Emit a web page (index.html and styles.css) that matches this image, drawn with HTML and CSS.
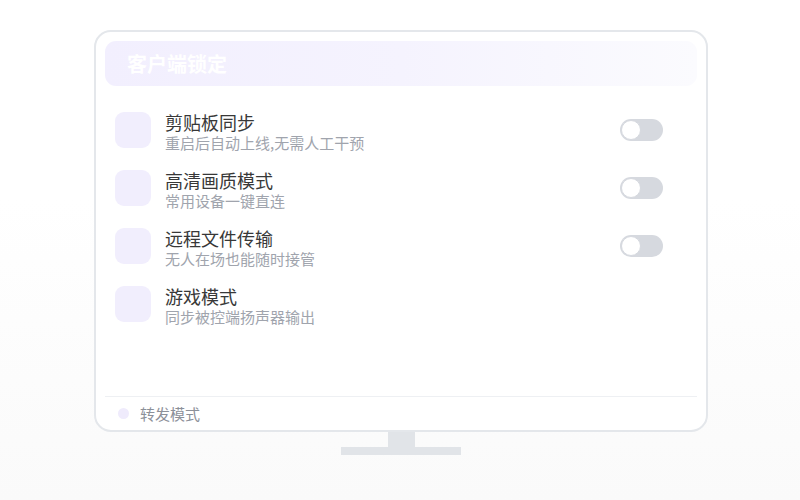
FILE: index.html
```html
<!DOCTYPE html>
<html lang="zh">
<head>
<meta charset="utf-8">
<link rel="stylesheet" href="styles.css">
</head>
<body>
<div class="stage">
  <div class="monitor">
    <div class="header">客户端锁定</div>
    <div class="list">
      <div class="row">
        <div class="icon"></div>
        <div class="text"><div class="title">剪贴板同步</div><div class="sub">重启后自动上线,无需人工干预</div></div>
        <div class="toggle"><span class="knob"></span></div>
      </div>
      <div class="row">
        <div class="icon"></div>
        <div class="text"><div class="title">高清画质模式</div><div class="sub">常用设备一键直连</div></div>
        <div class="toggle"><span class="knob"></span></div>
      </div>
      <div class="row">
        <div class="icon"></div>
        <div class="text"><div class="title">远程文件传输</div><div class="sub">无人在场也能随时接管</div></div>
        <div class="toggle"><span class="knob"></span></div>
      </div>
      <div class="row">
        <div class="icon"></div>
        <div class="text"><div class="title">游戏模式</div><div class="sub">同步被控端扬声器输出</div></div>
      </div>
    </div>
    <div class="footer"><span class="dot"></span><span class="ftext">转发模式</span></div>
  </div>
  <div class="neck"></div>
  <div class="base"></div>
</div>
</body>
</html>
```
FILE: styles.css
```css
html, body {
  margin: 0;
  padding: 0;
}
body {
  width: 800px;
  height: 500px;
  background: linear-gradient(to bottom, #ffffff 0%, #ffffff 40%, #fafafa 100%);
  font-family: "Noto Sans CJK SC", "Noto Sans", sans-serif;
  overflow: hidden;
}
.stage {
  display: flex;
  flex-direction: column;
  align-items: center;
  padding-top: 30px;
  padding-left: 2px;
}
.monitor {
  box-sizing: border-box;
  width: 614px;
  height: 402px;
  border: 2px solid #e4e7eb;
  border-radius: 17px;
  background: #ffffff;
  padding: 9px 9px 0 9px;
  display: flex;
  flex-direction: column;
}
.header {
  height: 45px;
  border-radius: 11px;
  background: linear-gradient(to right, #f2effe 0%, #f5f3fe 50%, #fbfbfe 100%);
  color: #ffffff;
  font-size: 20px;
  font-weight: 700;
  line-height: 45px;
  padding-left: 22px;
}
.list {
  padding: 26px 34px 0 10px;
  display: flex;
  flex-direction: column;
}
.row {
  height: 58px;
  display: grid;
  grid-template-columns: 36px 1fr 43px;
  column-gap: 14px;
  align-items: start;
}
.icon {
  width: 36px;
  height: 36px;
  border-radius: 9px;
  background: #f1eefd;
}
.text {
  margin-top: -1px;
}
.title {
  font-size: 18px;
  line-height: 22px;
  color: #383838;
}
.sub {
  font-size: 15px;
  line-height: 20px;
  color: #a0a4ad;
}
.toggle {
  margin-top: 7px;
  width: 43px;
  height: 22px;
  border-radius: 11px;
  background: #d6d9df;
  display: flex;
  align-items: center;
  padding-left: 1px;
  box-sizing: border-box;
}
.knob {
  width: 20px;
  height: 20px;
  box-sizing: border-box;
  border-radius: 50%;
  background: #ffffff;
  border: 1.5px solid #d6d9df;
}
.footer {
  margin-top: auto;
  height: 33px;
  border-top: 1px solid #eef0f3;
  display: flex;
  align-items: center;
  padding-left: 13px;
  gap: 11px;
}
.dot {
  width: 11px;
  height: 11px;
  border-radius: 50%;
  background: #efebfc;
}
.ftext {
  font-size: 15px;
  color: #8c9099;
}
.neck {
  width: 27px;
  height: 15px;
  background: #e1e4e8;
}
.base {
  width: 120px;
  height: 8px;
  background: #e1e4e8;
}
```
